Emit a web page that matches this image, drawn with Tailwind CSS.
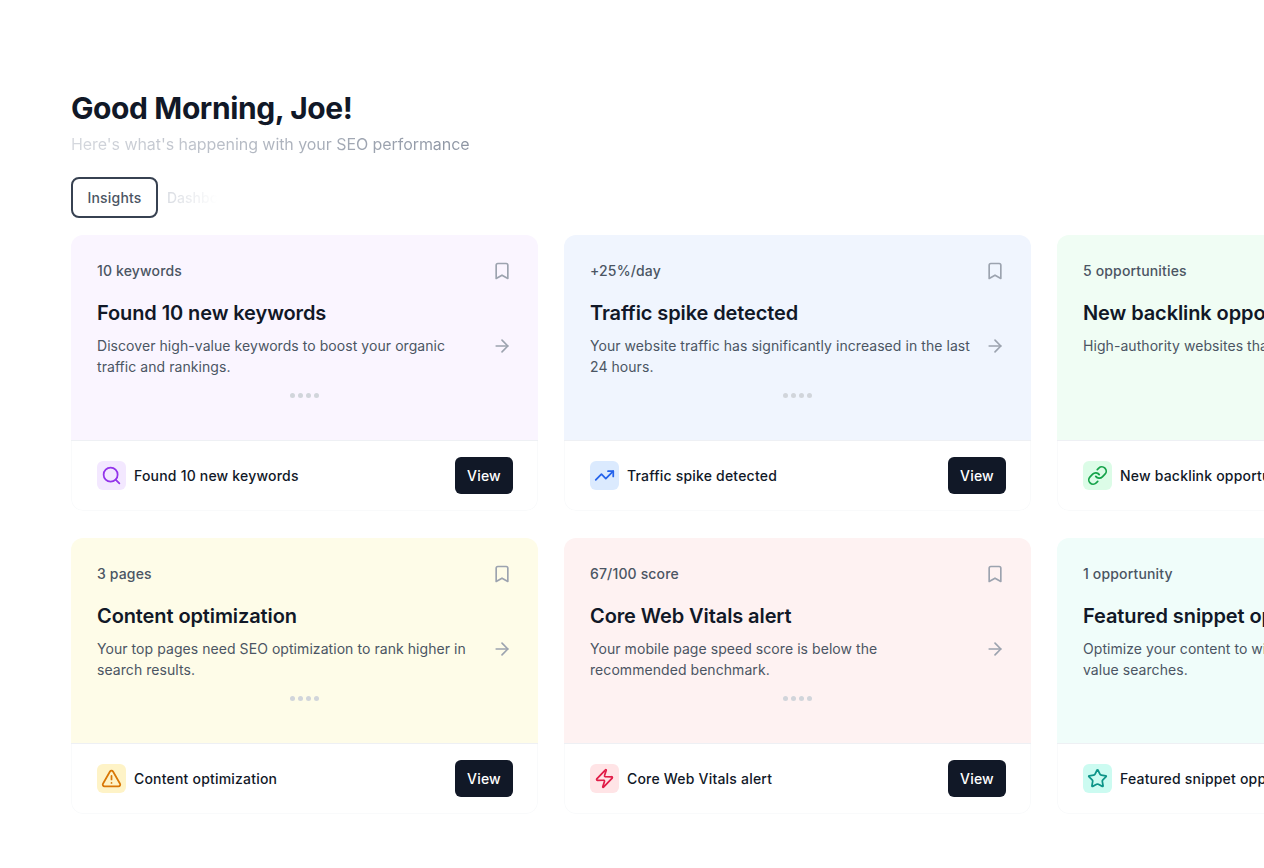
<!DOCTYPE html>
<html lang="en">

<head>
    <meta charset="UTF-8">
    <meta name="viewport" content="width=device-width, initial-scale=1.0">
    <title>SEO Insights</title>
    <script src="https://cdn.jsdelivr.net/npm/@tailwindcss/browser@4"></script>
</head>

<body class="bg-white h-[868px] overflow-hidden font-['Inter',sans-serif]">
    <main class="pt-[90px] pl-[71px]">
        <h1 class="text-[30px] leading-[36px] font-bold tracking-[-0.4px] text-[#111827]">Good Morning, Joe!</h1>
        <p class="mt-[6px] w-[402px] whitespace-nowrap text-[16px] leading-[24px] tracking-[-0.06px] text-transparent bg-clip-text bg-linear-to-r from-[#d5d8de] to-[#8b93a1]">Here's what's happening with your SEO performance</p>

        <div class="mt-[21px] flex items-center">
            <button class="w-[87px] h-[41px] rounded-[8px] border-2 border-[#374151] bg-white text-[14px] tracking-[0.2px] font-medium text-[#4b5563]">Insights</button>
            <span class="ml-[9px] w-[50px] overflow-hidden whitespace-nowrap text-[14px] font-medium text-transparent bg-clip-text bg-linear-to-r from-[#d9dce2] to-white">Dashboard</span>
        </div>

        <div id="cards" class="mt-[17px] grid grid-cols-[467px_467px_467px] gap-x-[26px] gap-y-[27px] w-[1453px]"></div>
    </main>

    <script>
        const cards = [
            {
                tag: "10 keywords", title: "Found 10 new keywords",
                text: "Discover high-value keywords to boost your organic traffic and rankings.",
                bg: "bg-[#faf5ff]", iconBg: "bg-[#f3e8ff]", iconColor: "text-[#9333ea]",
                icon: '<circle cx="11" cy="11" r="8"/><path d="m21 21-4.3-4.3"/>'
            },
            {
                tag: "+25%/day", title: "Traffic spike detected",
                text: "Your website traffic has significantly increased in the last 24 hours.",
                bg: "bg-[#f0f5fe]", iconBg: "bg-[#dbeafe]", iconColor: "text-[#2563eb]",
                icon: '<path d="M22 7 13.5 15.5 8.5 10.5 2 17"/><path d="M16 7h6v6"/>'
            },
            {
                tag: "5 opportunities", title: "New backlink opportunities",
                text: "High-authority websites that could link to your content.",
                bg: "bg-[#f0fdf4]", iconBg: "bg-[#dcfce7]", iconColor: "text-[#16a34a]",
                icon: '<path d="M10 13a5 5 0 0 0 7.54.54l3-3a5 5 0 0 0-7.07-7.07l-1.72 1.71"/><path d="M14 11a5 5 0 0 0-7.54-.54l-3 3a5 5 0 0 0 7.07 7.07l1.71-1.71"/>'
            },
            {
                tag: "3 pages", title: "Content optimization",
                text: "Your top pages need SEO optimization to rank higher in search results.",
                bg: "bg-[#fefce8]", iconBg: "bg-[#fef3c7]", iconColor: "text-[#d97706]",
                icon: '<path d="m21.73 18-8-14a2 2 0 0 0-3.48 0l-8 14A2 2 0 0 0 4 21h16a2 2 0 0 0 1.73-3"/><path d="M12 9v4"/><path d="M12 17h.01"/>'
            },
            {
                tag: "67/100 score", title: "Core Web Vitals alert",
                text: "Your mobile page speed score is below the recommended benchmark.",
                bg: "bg-[#fef2f2]", iconBg: "bg-[#ffe4e6]", iconColor: "text-[#e11d48]",
                icon: '<path d="M4 14a1 1 0 0 1-.78-1.63l9.9-10.2a.5.5 0 0 1 .86.46l-1.92 6.02A1 1 0 0 0 13 10h7a1 1 0 0 1 .78 1.63l-9.9 10.2a.5.5 0 0 1-.86-.46l1.92-6.02A1 1 0 0 0 11 14z"/>'
            },
            {
                tag: "1 opportunity", title: "Featured snippet opportunity",
                text: "Optimize your content to win featured snippets for high-value searches.",
                bg: "bg-[#f0fdfa]", iconBg: "bg-[#ccfbf1]", iconColor: "text-[#0d9488]",
                icon: '<path d="M11.525 2.295a.53.53 0 0 1 .95 0l2.31 4.679a2.123 2.123 0 0 0 1.595 1.16l5.166.756a.53.53 0 0 1 .294.904l-3.736 3.638a2.123 2.123 0 0 0-.611 1.878l.882 5.14a.53.53 0 0 1-.771.56l-4.618-2.428a2.122 2.122 0 0 0-1.973 0L6.396 21.01a.53.53 0 0 1-.77-.56l.881-5.139a2.122 2.122 0 0 0-.611-1.879L2.16 9.795a.53.53 0 0 1 .294-.906l5.165-.755a2.122 2.122 0 0 0 1.597-1.16z"/>'
            }
        ];

        document.getElementById('cards').innerHTML = cards.map(card => `
            <article class="h-[276px] flex flex-col rounded-[12px] overflow-hidden bg-white">
                <div class="${card.bg} h-[206px] shrink-0 border-b border-[#eef0f4] pt-[26px] px-[26px] relative">
                    <div class="flex items-center justify-between h-[20px]">
                        <span class="text-[14px] leading-[20px] tracking-[0.15px] font-medium text-[#4b5563]">${card.tag}</span>
                        <svg class="w-[20px] h-[20px] text-[#9ca3af]" viewBox="0 0 24 24" fill="none" stroke="currentColor" stroke-width="2" stroke-linecap="round" stroke-linejoin="round"><path d="m19 21-7-4-7 4V5a2 2 0 0 1 2-2h10a2 2 0 0 1 2 2z"/></svg>
                    </div>
                    <h3 class="mt-[18px] text-[20px] leading-[28px] font-semibold tracking-[-0.1px] whitespace-nowrap text-[#111827]">${card.title}</h3>
                    <div class="mt-[8px] flex items-start justify-between">
                        <p class="w-[384px] text-[14px] leading-[21px] tracking-[0.06px] text-[#4b5563]">${card.text}</p>
                        <svg class="mt-[1px] w-[20px] h-[20px] text-[#9ca3af]" viewBox="0 0 24 24" fill="none" stroke="currentColor" stroke-width="2" stroke-linecap="round" stroke-linejoin="round"><path d="M5 12h14"/><path d="m12 5 7 7-7 7"/></svg>
                    </div>
                    <div class="absolute left-0 right-0 top-[158px] flex justify-center gap-[3px]">
                        <span class="w-[5px] h-[5px] rounded-full bg-[#d1d5db]"></span>
                        <span class="w-[5px] h-[5px] rounded-full bg-[#d1d5db]"></span>
                        <span class="w-[5px] h-[5px] rounded-full bg-[#d1d5db]"></span>
                        <span class="w-[5px] h-[5px] rounded-full bg-[#d1d5db]"></span>
                    </div>
                </div>
                <div class="flex-1 flex items-center justify-between pl-[25px] pr-[24px] border-x border-b border-[#f9fafb] rounded-b-[12px]">
                    <div class="flex items-center gap-[8px]">
                        <span class="w-[29px] h-[29px] rounded-[6px] flex items-center justify-center ${card.iconBg} ${card.iconColor}">
                            <svg class="w-[21px] h-[21px]" viewBox="0 0 24 24" fill="none" stroke="currentColor" stroke-width="2" stroke-linecap="round" stroke-linejoin="round">${card.icon}</svg>
                        </span>
                        <span class="text-[14px] leading-[20px] tracking-[0.2px] font-medium whitespace-nowrap text-[#111827]">${card.title}</span>
                    </div>
                    <button class="w-[58px] h-[37px] rounded-[6px] bg-[#111827] text-[14px] tracking-[0.2px] font-medium text-white">View</button>
                </div>
            </article>`).join('');
    </script>
</body>

</html>
